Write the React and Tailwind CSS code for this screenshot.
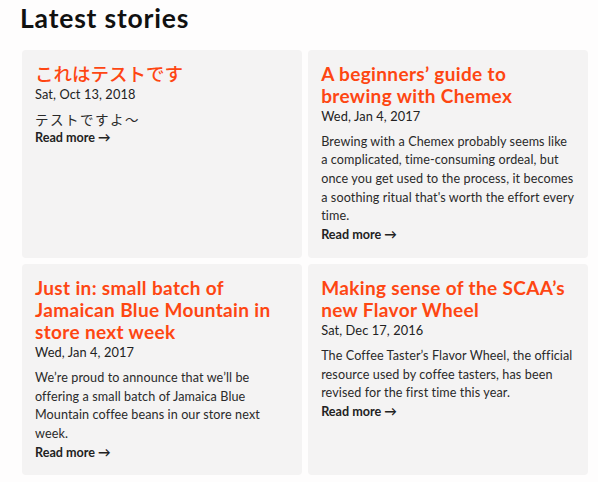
import React from "react";

const stories = [
  {
    title: "これはテストです",
    cjk: true,
    date: "Sat, Oct 13, 2018",
    body: "テストですよ〜",
  },
  {
    title: "A beginners’ guide to brewing with Chemex",
    date: "Wed, Jan 4, 2017",
    body:
      "Brewing with a Chemex probably seems like a complicated, time-consuming ordeal, but once you get used to the process, it becomes a soothing ritual that's worth the effort every time.",
  },
  {
    title: "Just in: small batch of Jamaican Blue Mountain in store next week",
    date: "Wed, Jan 4, 2017",
    body:
      "We’re proud to announce that we’ll be offering a small batch of Jamaica Blue Mountain coffee beans in our store next week.",
  },
  {
    title: "Making sense of the SCAA’s new Flavor Wheel",
    date: "Sat, Dec 17, 2016",
    body:
      "The Coffee Taster’s Flavor Wheel, the official resource used by coffee tasters, has been revised for the first time this year.",
  },
];

export default function App() {
  return (
    <div className="min-h-[482px] w-[598px] bg-[#fefdfd] pl-[22px] pr-[10px] pt-[3px] font-['Lato','Noto_Sans_CJK_JP',sans-serif] text-[#222]">
      <h1 className="ml-[-2px] mb-[17px] text-[26.5px] font-bold leading-[30px] tracking-[0.8px] text-[#111]">
        Latest stories
      </h1>
      <div className="grid grid-cols-2 gap-[6.4px]">
        {stories.map((s, i) => (
          <div key={i} className="rounded-[4px] bg-[#f4f3f3] p-[13px]">
            <h2
              className={
                s.cjk
                  ? "text-[18.5px] font-medium leading-[22px] text-[#fe4612]"
                  : "text-[19px] font-bold leading-[22px] tracking-[0.35px] text-[#fe4612]"
              }
            >
              {s.title}
            </h2>
            <div className="text-[12.8px] leading-[19.6px] tracking-[0.1px] text-[#222]">{s.date}</div>
            <p
              className={
                s.cjk
                  ? "mt-[6px] text-[13.5px] leading-[18.7px] tracking-[1.5px] text-[#2a2a2a]"
                  : "mt-[6px] text-[12.6px] leading-[18.7px] tracking-[0.1px] text-[#2a2a2a]"
              }
            >
              {s.body}
            </p>
            <a className="block text-[12.6px] font-bold leading-[18.7px] text-[#222]">
              Read more →
            </a>
          </div>
        ))}
      </div>
    </div>
  );
}
